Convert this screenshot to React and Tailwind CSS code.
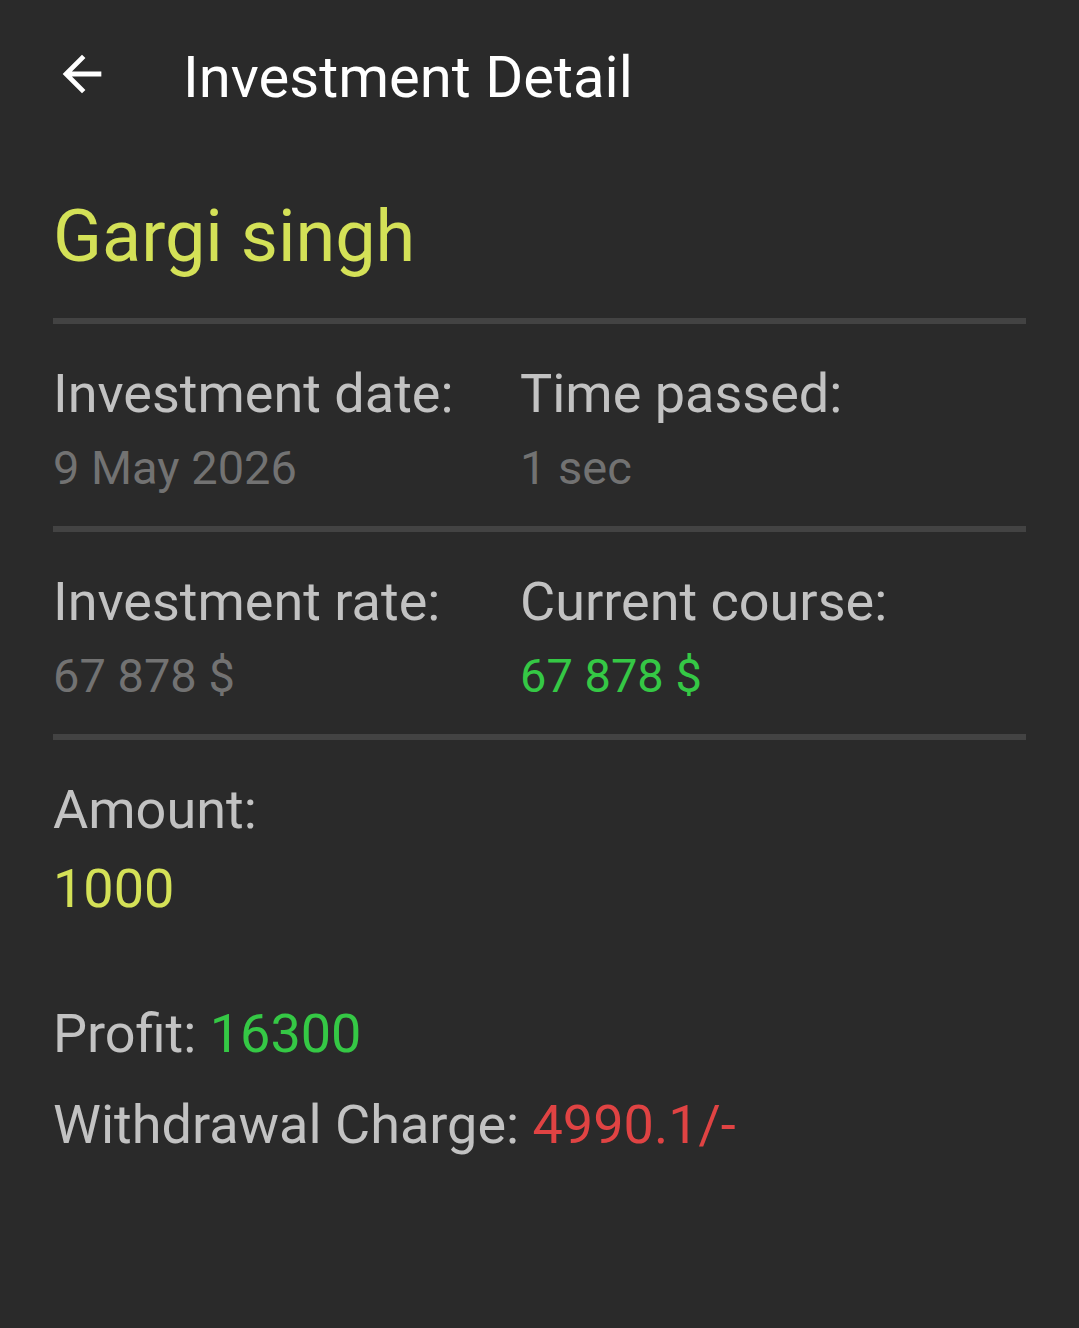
import React from "react";

const font = { fontFamily: "Roboto, 'Noto Sans', sans-serif" };

function Divider() {
  return <div className="h-[6px] bg-[#434343]" />;
}

function Field({ label, value, valueClass }) {
  return (
    <div>
      <p className="text-[54px] leading-[54px] text-[#c2c2c2]">{label}</p>
      <p className={`mt-[23px] text-[47px] leading-[47px] ${valueClass}`}>{value}</p>
    </div>
  );
}

export default function App() {
  const detail = {
    name: "Gargi singh",
    date: "9 May 2026",
    passed: "1 sec",
    rate: "67 878 $",
    course: "67 878 $",
    amount: "1000",
    profit: "16300",
    charge: "4990.1/-",
  };

  return (
    <div className="min-h-[1328px] bg-[#2a2a2a] antialiased" style={font}>
      {/* top bar */}
      <div className="flex items-start pl-[53px] pt-[48px]">
        <button className="-mt-[3px] text-white">
          <svg width="58" height="58" viewBox="0 0 24 24" fill="currentColor">
            <path d="M20 11H7.83l5.59-5.59L12 4l-8 8 8 8 1.41-1.41L7.83 13H20v-2z" />
          </svg>
        </button>
        <h1 className="ml-[72px] text-[58px] leading-[58px] font-normal text-white">
          Investment Detail
        </h1>
      </div>

      <div className="px-[53px]">
        <h2 className="mt-[95px] text-[72px] leading-[72px] text-[#d4e157]">{detail.name}</h2>

        <div className="mt-[45px]">
          <Divider />
        </div>

        <div className="grid grid-cols-[467px_1fr] pt-[43px] pb-[35px]">
          <Field label="Investment date:" value={detail.date} valueClass="text-[#727272]" />
          <Field label="Time passed:" value={detail.passed} valueClass="text-[#727272]" />
        </div>
        <Divider />

        <div className="grid grid-cols-[467px_1fr] pt-[43px] pb-[35px]">
          <Field label="Investment rate:" value={detail.rate} valueClass="text-[#727272]" />
          <Field label="Current course:" value={detail.course} valueClass="text-[#35c845]" />
        </div>
        <Divider />

        <div className="pt-[43px]">
          <p className="text-[54px] leading-[54px] text-[#c2c2c2]">Amount:</p>
          <p className="mt-[25px] text-[54px] leading-[54px] text-[#d4e157]">{detail.amount}</p>
        </div>

        <p className="mt-[91px] text-[54px] leading-[54px] text-[#c2c2c2]">
          Profit: <span className="text-[#35c845]">{detail.profit}</span>
        </p>
        <p className="mt-[37px] text-[54px] leading-[54px] text-[#c2c2c2]">
          Withdrawal Charge: <span className="text-[#e04343]">{detail.charge}</span>
        </p>
      </div>
    </div>
  );
}
